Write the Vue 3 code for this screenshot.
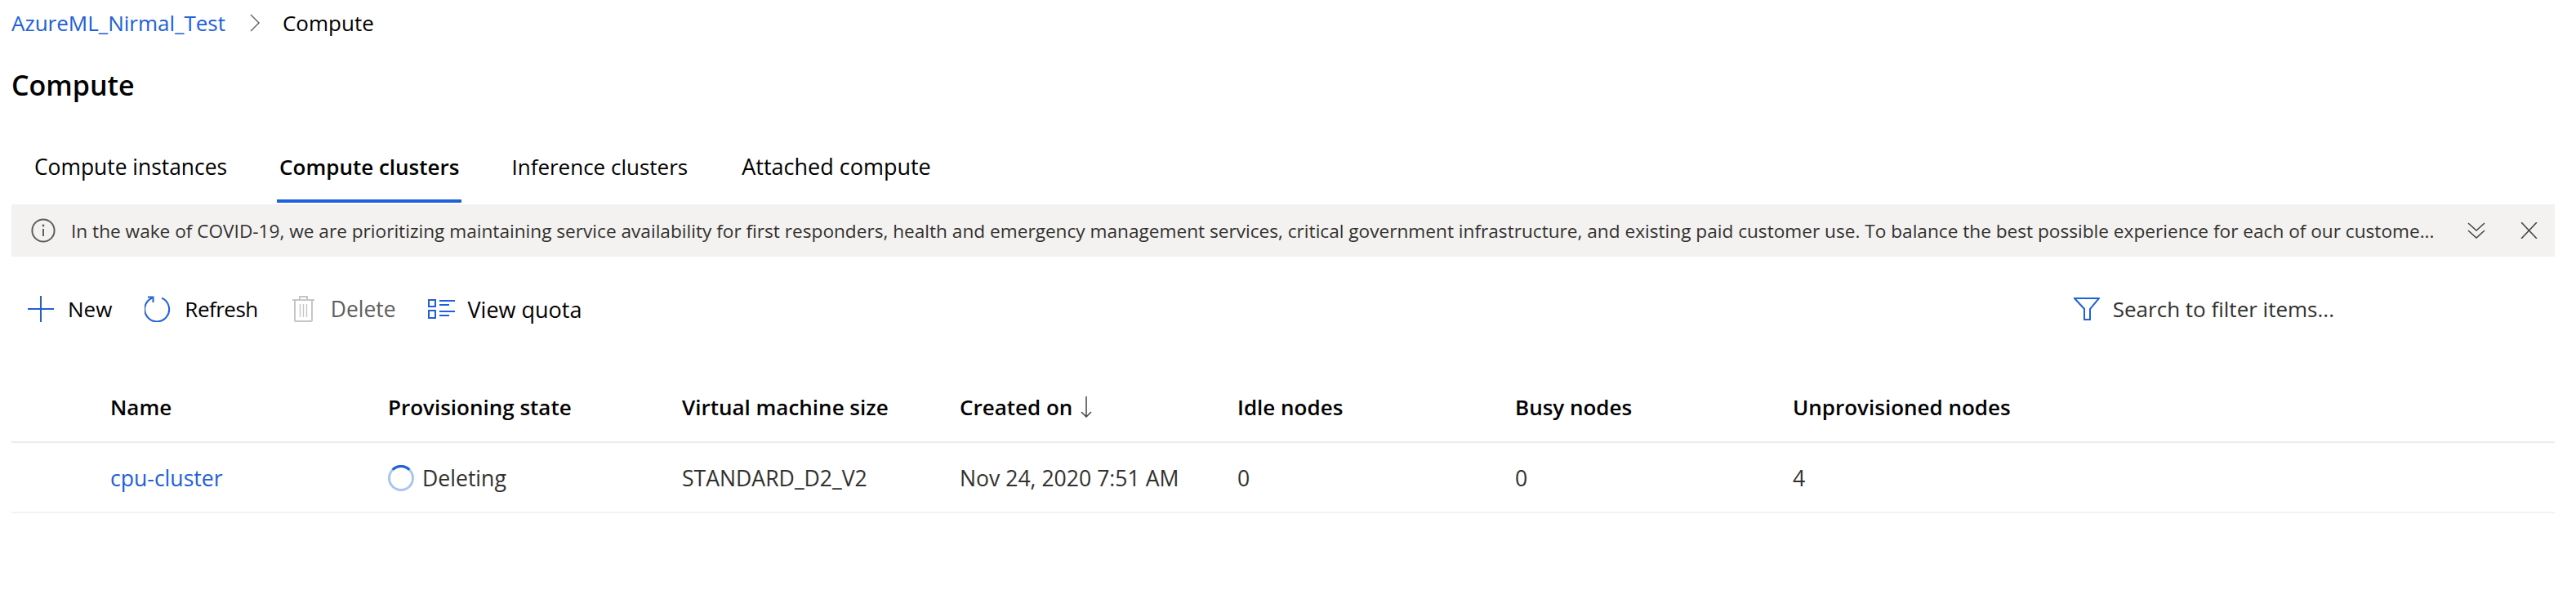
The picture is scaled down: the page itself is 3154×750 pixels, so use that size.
<template>
  <div class="page">
    <nav class="crumbs">
      <a class="link">AzureML_Nirmal_Test</a>
      <svg class="crumb-sep" width="12" height="22" viewBox="0 0 12 22"><path d="M1 1l10 10L1 21" fill="none" stroke="#605e5c" stroke-width="1.4" /></svg>
      <span>Compute</span>
    </nav>
    <h1 class="title">Compute</h1>

    <div class="tabs">
      <div v-for="tab in tabs" :key="tab" class="tab" :class="{ active: tab === 'Compute clusters' }">{{ tab }}</div>
    </div>

    <div class="notice">
      <svg class="notice-icon" width="30" height="30" viewBox="0 0 30 30">
        <circle cx="15" cy="15" r="13.6" fill="none" stroke="#605e5c" stroke-width="2" />
        <path d="M15 13v9" stroke="#605e5c" stroke-width="2" />
        <circle cx="15" cy="9" r="1.4" fill="#605e5c" />
      </svg>
      <span class="notice-text">{{ notice }}</span>
      <svg class="notice-more" width="22" height="20" viewBox="0 0 22 20">
        <path d="M1 1l10 9 10-9M1 10l10 9 10-9" fill="none" stroke="#484644" stroke-width="1.6" />
      </svg>
      <svg class="notice-close" width="21" height="20" viewBox="0 0 21 20">
        <path d="M1 0l19 20M20 0L1 20" fill="none" stroke="#484644" stroke-width="1.6" />
      </svg>
    </div>

    <div class="toolbar">
      <button class="tool tool-new">
        <svg width="32" height="32" viewBox="0 0 32 32"><path d="M0 16h32M16 0v32" stroke="#2060d8" stroke-width="2" /></svg>
        New
      </button>
      <button class="tool tool-refresh">
        <svg width="32" height="32" viewBox="0 0 32 32">
          <path d="M21 2.600A15 15 0 1 1 9.500 2.500" fill="none" stroke="#2060d8" stroke-width="2" />
          <path d="M4 1.500h6.500V8" fill="none" stroke="#2060d8" stroke-width="2" />
        </svg>
        Refresh
      </button>
      <button class="tool tool-delete">
        <svg width="27" height="32" viewBox="0 0 27 32">
          <path d="M0 5h27M9 5V1h9v4M3 5v25a1 1 0 0 0 1 1h19a1 1 0 0 0 1-1V5" fill="none" stroke="#c8c6c4" stroke-width="2" />
          <path d="M9.500 10v16M13.500 10v16M17.500 10v16" stroke="#c8c6c4" stroke-width="1.400" />
        </svg>
        Delete
      </button>
      <button class="tool tool-quota">
        <svg width="33" height="24" viewBox="0 0 33 24">
          <path d="M1 1h8v8H1zM1 14h8v9H1z" fill="none" stroke="#2060d8" stroke-width="2" />
          <path d="M14 2h19M14 7h12M14 15h19M14 20h12" stroke="#2060d8" stroke-width="2" />
        </svg>
        View quota
      </button>
      <div class="search">
        <svg width="32" height="28" viewBox="0 0 32 28">
          <path d="M1 1h30L20 14v13h-7V14z" fill="none" stroke="#2060d8" stroke-width="2" />
        </svg>
        Search to filter items...
      </div>
    </div>

    <div class="row head">
      <div v-for="col in columns" :key="col" class="cell">
        {{ col }}
        <svg v-if="col === 'Created on'" class="sort" width="14" height="26" viewBox="0 0 14 26">
          <path d="M7 0v25M1 19l6 6 6-6" fill="none" stroke="#484644" stroke-width="1.500" />
        </svg>
      </div>
    </div>
    <div class="row body">
      <div class="cell"><a class="link">cpu-cluster</a></div>
      <div class="cell state">
        <svg width="32" height="32" viewBox="0 0 32 32">
          <circle cx="16" cy="16" r="14.500" fill="none" stroke="#a9c5f2" stroke-width="3" />
          <path d="M5.700 5.700A14.500 14.500 0 0 1 26.300 5.700" fill="none" stroke="#2060d8" stroke-width="3" />
        </svg>
        Deleting
      </div>
      <div class="cell">STANDARD_D2_V2</div>
      <div class="cell">Nov 24, 2020 7:51 AM</div>
      <div class="cell">0</div>
      <div class="cell">0</div>
      <div class="cell">4</div>
    </div>
  </div>
</template>

<script setup>
const tabs = ['Compute instances', 'Compute clusters', 'Inference clusters', 'Attached compute']
const columns = ['Name', 'Provisioning state', 'Virtual machine size', 'Created on', 'Idle nodes', 'Busy nodes', 'Unprovisioned nodes']
const notice = 'In the wake of COVID-19, we are prioritizing maintaining service availability for first responders, health and emergency management services, critical government infrastructure, and existing paid customer use. To balance the best possible experience for each of our custome...'
</script>

<style>
html, body {
  background: #fff;
}
</style>

<style scoped>
.page {
  width: 3114px;
  height: 750px;
  padding: 0 26px 0 14px;
  font-family: "Open Sans", "Noto Sans", sans-serif;
  font-size: 26px;
  color: #000;
}

.link {
  color: #2060d8;
}

.crumbs {
  display: flex;
  align-items: center;
  height: 56px;
}

.crumb-sep {
  margin: 0 28px 0 30px;
}

.title {
  margin: 0;
  height: 84px;
  line-height: 40px;
  padding-top: 28px;
  box-sizing: border-box;
  font-size: 34px;
  font-weight: 600;
}

.tabs {
  display: flex;
  height: 80px;
  padding-left: 28px;
  margin-top: 30px;
  font-size: 26px;
}

.tab {
  height: 68px;
  margin: 10px 64px 0 0;
  line-height: 48px;
  box-sizing: border-box;
}

.tab:first-child {
  font-size: 26.4px;
}

.tab:last-child {
  font-size: 27px;
  margin-left: 2px;
}

.tab.active {
  font-weight: 600;
  margin: 10px 61px 0 -3px;
  padding: 0 3px;
  border-bottom: 4px solid #2060d8;
}

.notice {
  display: flex;
  align-items: center;
  height: 64px;
  background: #f3f2f1;
  color: #323130;
  font-size: 22.64px;
}

.notice-icon {
  margin-left: 24px;
  margin-right: 19px;
  flex: none;
}

.notice-text {
  white-space: nowrap;
  flex: 1;
}

.notice-more {
  margin-right: 43px;
  flex: none;
}

.notice-close {
  margin-right: 21px;
  flex: none;
}

.toolbar {
  display: flex;
  align-items: center;
  height: 48px;
  margin-top: 40px;
  padding-left: 20px;
}

.tool {
  display: flex;
  align-items: center;
  gap: 17px;
  padding: 0;
  border: 0;
  background: none;
  font: inherit;
  color: #000;
  margin-right: 40px;
}

.tool-refresh {
  letter-spacing: -0.5px;
  margin-right: 42px;
}

.tool-delete {
  color: #605e5c;
  font-size: 26.4px;
  gap: 20px;
}

.tool-quota {
  font-size: 27px;
  gap: 15px;
}

.search {
  display: flex;
  align-items: center;
  gap: 16px;
  margin-left: auto;
  margin-right: 270px;
  color: #323130;
}

.row {
  display: grid;
  grid-template-columns: 340px 360px repeat(4, 340px) 1fr;
  padding-left: 121px;
}

.head {
  height: 140px;
  padding-top: 54px;
  box-sizing: border-box;
  align-items: center;
  font-weight: 600;
  border-bottom: 2px solid #edebe9;
}

.body {
  height: 86px;
  padding-top: 2px;
  box-sizing: border-box;
  align-items: center;
  font-size: 26.6px;
  color: #323130;
  border-bottom: 2px solid #f3f2f1;
}

.cell {
  display: flex;
  align-items: center;
  white-space: nowrap;
}

.sort {
  margin-left: 10px;
}

.state {
  gap: 10px;
}
</style>
